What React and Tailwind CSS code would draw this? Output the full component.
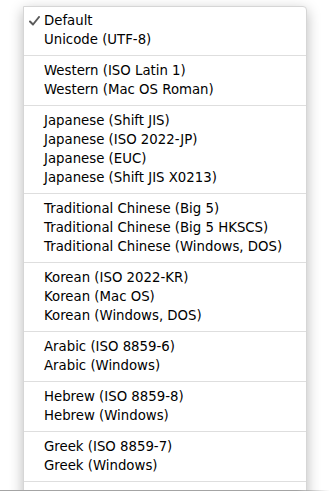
const groups = [
  ["Default", "Unicode (UTF-8)"],
  ["Western (ISO Latin 1)", "Western (Mac OS Roman)"],
  [
    "Japanese (Shift JIS)",
    "Japanese (ISO 2022-JP)",
    "Japanese (EUC)",
    "Japanese (Shift JIS X0213)",
  ],
  [
    "Traditional Chinese (Big 5)",
    "Traditional Chinese (Big 5 HKSCS)",
    "Traditional Chinese (Windows, DOS)",
  ],
  ["Korean (ISO 2022-KR)", "Korean (Mac OS)", "Korean (Windows, DOS)"],
  ["Arabic (ISO 8859-6)", "Arabic (Windows)"],
  ["Hebrew (ISO 8859-8)", "Hebrew (Windows)"],
  ["Greek (ISO 8859-7)", "Greek (Windows)"],
  ["Cyrillic (ISO 8859-5)"],
];

function Check() {
  return (
    <svg
      width="11"
      height="10"
      viewBox="0 0 11 10"
      className="absolute left-[5px] top-[5px]"
    >
      <path
        d="M1 5.5 L4 8.5 L10 1"
        fill="none"
        stroke="#5a5a5a"
        strokeWidth="2"
        strokeLinecap="round"
        strokeLinejoin="round"
      />
    </svg>
  );
}

export default function App() {
  return (
    <div className="w-[330px] h-[500px] bg-white">
      <div className="relative h-[491px] overflow-hidden pt-[6px] pl-[23px]">
        {/* Menu */}
        <div
          className="w-[284px] bg-white border border-[#d6d6d6] rounded-tr-[4px] pt-[4px] shadow-[0_4px_14px_rgba(0,0,0,0.28)] text-[13.3px] text-black"
          style={{ fontFamily: '"DejaVu Sans", "Lucida Grande", sans-serif' }}
        >
          {groups.map((items, gi) => (
            <div key={gi}>
              {gi > 0 && (
                <div className="h-[12px] flex items-center">
                  <div className="w-full h-px bg-[#dedede]" />
                </div>
              )}
              {items.map((label, i) => (
                <div
                  key={label}
                  className={`relative h-[19px] leading-[19px] pl-[20px] whitespace-nowrap ${
                    gi === groups.length - 1 ? "text-[#c4c4c4]" : ""
                  }`}
                >
                  {gi === 0 && i === 0 && <Check />}
                  {label}
                </div>
              ))}
            </div>
          ))}
        </div>
        <div className="absolute left-0 bottom-0 w-full h-px bg-gradient-to-r from-[#a4a4a4] via-[#a4a4a4] via-90% to-transparent" />
      </div>
    </div>
  );
}
